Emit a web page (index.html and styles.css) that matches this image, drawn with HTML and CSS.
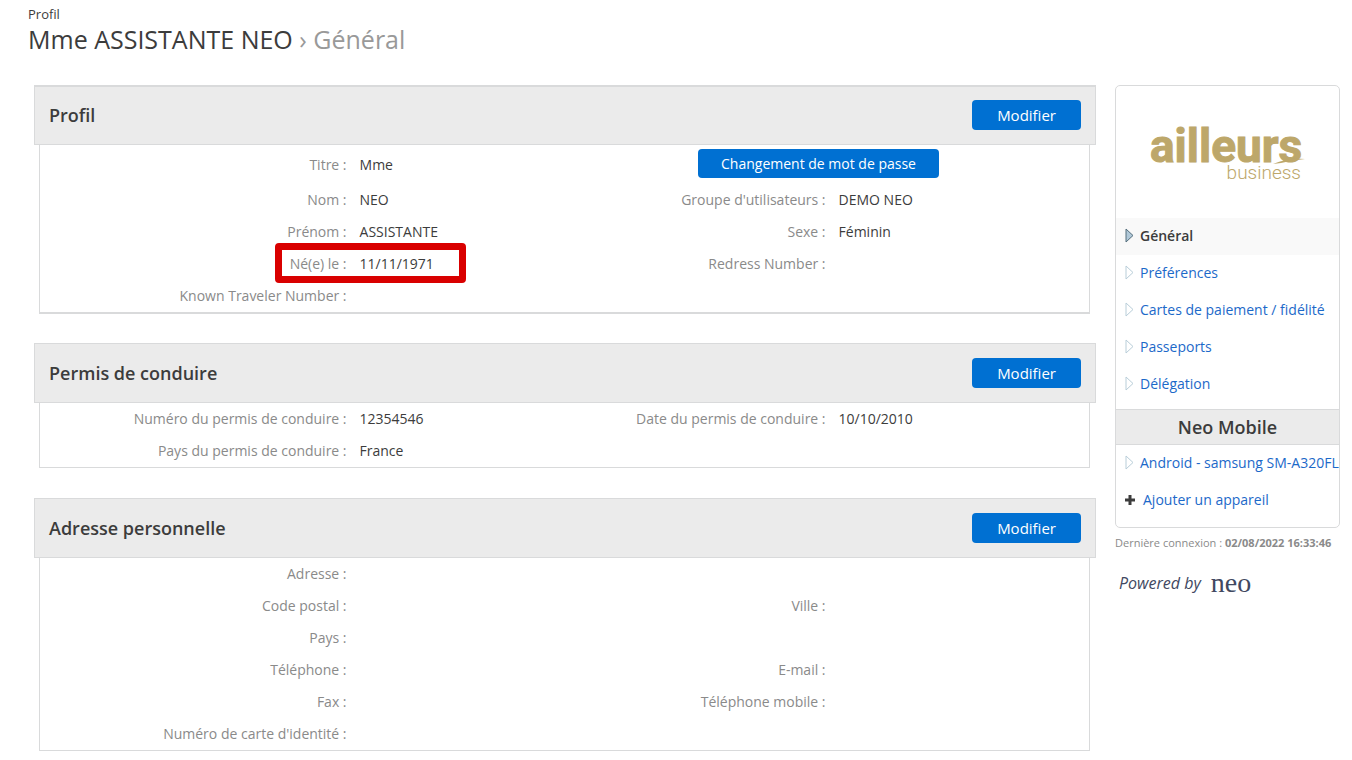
FILE: index.html
```html
<!DOCTYPE html>
<html lang="fr">
<head>
    <meta charset="utf-8">
    <title>Profil - Général</title>
    <link rel="stylesheet" href="styles.css">
</head>
<body>
    <header class="page-header">
        <div class="breadcrumb">Profil</div>
        <h1>Mme ASSISTANTE NEO <span>› Général</span></h1>
    </header>
    <div class="page">
        <main class="content">
            <section class="card card-main">
                <div class="card-header">
                    <h2>Profil</h2>
                    <button type="button" class="btn">Modifier</button>
                </div>
                <dl class="fields">
                    <div class="field tall"><dt>Titre :</dt><dd>Mme</dd></div>
                    <div class="password"><button type="button" class="btn btn-password">Changement de mot de passe</button></div>
                    <div class="field"><dt>Nom :</dt><dd>NEO</dd></div>
                    <div class="field"><dt>Groupe d'utilisateurs :</dt><dd>DEMO NEO</dd></div>
                    <div class="field"><dt>Prénom :</dt><dd>ASSISTANTE</dd></div>
                    <div class="field"><dt>Sexe :</dt><dd>Féminin</dd></div>
                    <div class="field highlight"><dt>Né(e) le :</dt><dd>11/11/1971</dd></div>
                    <div class="field"><dt>Redress Number :</dt><dd></dd></div>
                    <div class="field"><dt>Known Traveler Number :</dt><dd></dd></div>
                </dl>
            </section>
            <section class="card">
                <div class="card-header">
                    <h2>Permis de conduire</h2>
                    <button type="button" class="btn">Modifier</button>
                </div>
                <dl class="fields">
                    <div class="field"><dt>Numéro du permis de conduire :</dt><dd>12354546</dd></div>
                    <div class="field"><dt>Date du permis de conduire :</dt><dd>10/10/2010</dd></div>
                    <div class="field"><dt>Pays du permis de conduire :</dt><dd>France</dd></div>
                </dl>
            </section>
            <section class="card">
                <div class="card-header">
                    <h2>Adresse personnelle</h2>
                    <button type="button" class="btn">Modifier</button>
                </div>
                <dl class="fields">
                    <div class="field first-col"><dt>Adresse :</dt><dd></dd></div>
                    <div class="field first-col"><dt>Code postal :</dt><dd></dd></div>
                    <div class="field"><dt>Ville :</dt><dd></dd></div>
                    <div class="field first-col"><dt>Pays :</dt><dd></dd></div>
                    <div class="field first-col"><dt>Téléphone :</dt><dd></dd></div>
                    <div class="field"><dt>E-mail :</dt><dd></dd></div>
                    <div class="field first-col"><dt>Fax :</dt><dd></dd></div>
                    <div class="field"><dt>Téléphone mobile :</dt><dd></dd></div>
                    <div class="field first-col"><dt>Numéro de carte d'identité :</dt><dd></dd></div>
                </dl>
            </section>
        </main>

        <aside class="sidebar">
            <nav class="menu">
                <div class="logo">
                    <svg width="158" height="60" viewBox="0 0 158 60" role="img" aria-label="ailleurs business">
                        <text class="logo-name" x="1" y="38">ailleurs</text>
                        <path d="M124 40 Q138 34 156 35 Q144 36 132 39z" fill="#bda76a"/>
                        <text class="logo-sub" x="152" y="55" text-anchor="end">business</text>
                    </svg>
                </div>
                <a href="#" class="menu-item active"><svg class="arrow" viewBox="0 0 9 15"><path d="M1 1 L8 7.500 L1 14z"/></svg>Général</a>
                <a href="#" class="menu-item"><svg class="arrow" viewBox="0 0 9 15"><path d="M1 1 L8 7.500 L1 14z"/></svg>Préférences</a>
                <a href="#" class="menu-item"><svg class="arrow" viewBox="0 0 9 15"><path d="M1 1 L8 7.500 L1 14z"/></svg>Cartes de paiement / fidélité</a>
                <a href="#" class="menu-item"><svg class="arrow" viewBox="0 0 9 15"><path d="M1 1 L8 7.500 L1 14z"/></svg>Passeports</a>
                <a href="#" class="menu-item"><svg class="arrow" viewBox="0 0 9 15"><path d="M1 1 L8 7.500 L1 14z"/></svg>Délégation</a>
                <h3>Neo Mobile</h3>
                <a href="#" class="menu-item"><svg class="arrow" viewBox="0 0 9 15"><path d="M1 1 L8 7.500 L1 14z"/></svg>Android - samsung SM-A320FL</a>
                <a href="#" class="menu-item"><svg class="plus" viewBox="0 0 10 10"><path d="M5 0V10M0 5H10"/></svg>Ajouter un appareil</a>
            </nav>
            <p class="last-login">Dernière connexion : <b>02/08/2022 16:33:46</b></p>
            <p class="powered">Powered by <span>neo</span></p>
        </aside>
    </div>
</body>
</html>
```
FILE: styles.css
```css
* {
    box-sizing: border-box;
}

body {
    margin: 0;
    font-family: "Open Sans", sans-serif;
    font-size: 14px;
    line-height: 20px;
    color: #3c3c3c;
    background-color: #fff;
}

h1, h2, h3, p, dl, dd {
    margin: 0;
}

.page-header {
    padding: 4px 28px 0;
}

.breadcrumb {
    font-size: 13px;
}

h1 {
    font-size: 25px;
    font-weight: 400;
    line-height: 30px;
}

h1 span {
    color: #999;
}

.page {
    display: flex;
    gap: 19px;
    padding: 31px 12px 8px 34px;
}

.content {
    flex: 1;
}

.card {
    margin-bottom: 30px;
}

.card:last-child {
    margin-bottom: 0;
}

.card-header {
    display: flex;
    align-items: center;
    justify-content: space-between;
    height: 60px;
    padding: 0 14px;
    background-color: #ebebeb;
    border: 1px solid #d9dadb;
}

h2 {
    font-size: 18px;
    font-weight: 600;
}

.btn {
    height: 30px;
    padding: 0 25px;
    font-family: inherit;
    font-size: 15px;
    color: #fff;
    background-color: #0070d2;
    border: none;
    border-radius: 4px;
    cursor: pointer;
}

.fields {
    display: grid;
    grid-template-columns: 1fr 1fr;
    margin: 0 6px 0 5px;
    padding-right: 91px;
    border: 1px solid #d9dadb;
    border-top: none;
}

.field {
    position: relative;
    display: flex;
    line-height: 32px;
}

.field dt {
    width: 64%;
    text-align: right;
    color: #8a8a8a;
}

.field dd {
    padding-left: 13px;
}

.first-col {
    grid-column: 1;
}

.card-main {
    margin-bottom: 29px;
}

.card-main .card-header {
    padding-bottom: 2px;
    border-top-width: 2px;
}

.card-main .fields {
    border-bottom-width: 2px;
}

.tall {
    line-height: 39px;
}

.password {
    padding: 4px 0 0 120px;
    text-align: center;
}

.btn-password {
    display: block;
    margin: 0 auto;
    height: 29px;
    padding: 0 23px;
    font-size: 14px;
    white-space: nowrap;
}

.highlight::after {
    content: "";
    box-sizing: border-box;
    position: absolute;
    top: -5px;
    right: 53px;
    width: 191px;
    height: 40px;
    border: 7px solid #d90000;
    border-radius: 4px;
}

.sidebar {
    width: 225px;
}

.menu {
    padding-bottom: 8px;
    border: 1px solid #d9dadb;
    border-radius: 5px;
}

.logo {
    display: flex;
    justify-content: center;
    padding: 38px 0 34px;
}

.logo svg {
    overflow: visible;
}

.logo-name {
    font-family: Roboto, sans-serif;
    font-size: 46px;
    font-weight: 700;
    fill: #bda76a;
    stroke: #bda76a;
    stroke-width: 1;
}

.logo-sub {
    font-family: Roboto, sans-serif;
    font-size: 19px;
    font-weight: 300;
    fill: #bda76a;
}

.menu-item {
    display: flex;
    align-items: center;
    height: 37px;
    padding: 0 0 2px 9px;
    color: #1c69c9;
    text-decoration: none;
    white-space: nowrap;
}

.menu-item.active {
    font-weight: 600;
    color: #3c3c3c;
    background-color: #f9f9f9;
}

.arrow {
    flex: none;
    width: 9px;
    height: 15px;
    margin-right: 6px;
    fill: none;
    stroke: #b9ced9;
}

.active .arrow {
    fill: #b0c8d8;
    stroke: #546e7d;
}

.plus {
    width: 10px;
    height: 10px;
    margin-right: 8px;
    stroke: #3c3c3c;
    stroke-width: 3;
}

h3 {
    margin-top: 6px;
    font-size: 18px;
    font-weight: 600;
    line-height: 34px;
    text-align: center;
    background-color: #ebebeb;
    border: solid #d9dadb;
    border-width: 1px 0;
}

.last-login {
    padding-top: 5px;
    font-size: 11px;
    color: #8a8a8a;
    white-space: nowrap;
}

.last-login b {
    font-weight: 700;
}

.powered {
    display: flex;
    align-items: center;
    gap: 10px;
    padding: 15px 4px 0;
    font-size: 16px;
    font-style: italic;
    line-height: 30px;
    color: #414861;
}

.powered span {
    font-family: "Liberation Serif", serif;
    font-size: 28px;
    font-style: normal;
}
```
